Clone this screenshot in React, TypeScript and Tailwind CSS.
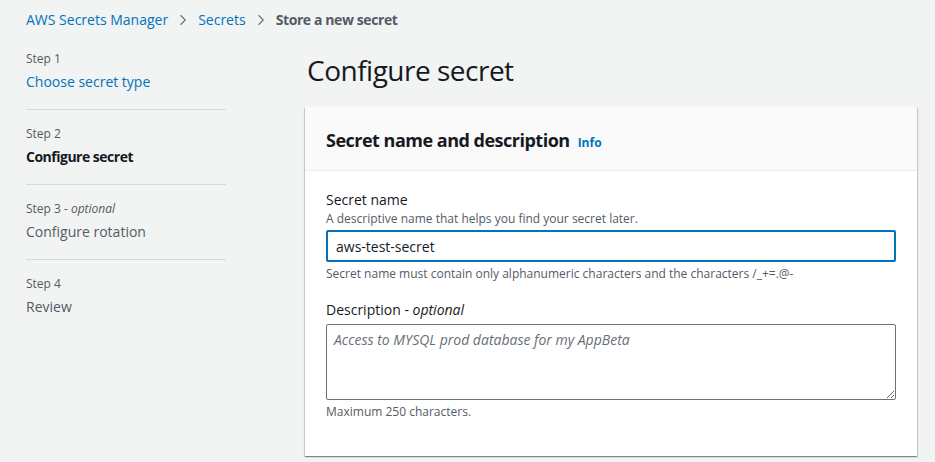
import { ChevronRight } from "lucide-react";

const FONT = { fontFamily: '"Open Sans", "Noto Sans", Arial, sans-serif' };

type Step = { label: string; title: string; optional?: boolean; state: "link" | "active" | "idle" };

const STEPS: Step[] = [
  { label: "Step 1", title: "Choose secret type", state: "link" },
  { label: "Step 2", title: "Configure secret", state: "active" },
  { label: "Step 3", title: "Configure rotation", optional: true, state: "idle" },
  { label: "Step 4", title: "Review", state: "idle" },
];

function StepNav() {
  return (
    <nav className="w-[200px] shrink-0">
      {STEPS.map((s, i) => (
        <div
          key={s.label}
          className={
            "pb-[14px] " + (i > 0 ? "border-t border-[#d5dbdb] pt-[14px]" : "pt-0")
          }
        >
          <div className="text-[12px] leading-[20px] text-[#545b64]">
            {s.label}
            {s.optional && <i> - optional</i>}
          </div>
          <div
            className={
              "text-[14px] leading-[26px] " +
              (s.state === "link"
                ? "text-[#0073bb]"
                : s.state === "active"
                  ? "font-bold tracking-[-0.5px] text-[#16191f]"
                  : "text-[#545b64]")
            }
          >
            {s.title}
          </div>
        </div>
      ))}
    </nav>
  );
}

export default function App() {
  return (
    <div className="min-h-[462px] bg-[#f2f3f3] text-[#16191f]" style={FONT}>
      <div className="flex items-center gap-[6px] px-[26px] pt-[9px] text-[14px] leading-[22px]">
        <span className="text-[#0073bb]">AWS Secrets Manager</span>
        <ChevronRight className="size-[18px] text-[#687078]" strokeWidth={1.5} />
        <span className="text-[#0073bb]">Secrets</span>
        <ChevronRight className="size-[18px] text-[#687078]" strokeWidth={1.5} />
        <span className="font-bold tracking-[-0.4px] text-[#545b64]">Store a new secret</span>
      </div>

      <div className="flex gap-[79px] pl-[26px] pr-[18px] pt-[18px]">
        <StepNav />

        <main className="min-w-0 flex-1 pt-[3px]">
          <h1 className="pl-[2px] text-[28px] leading-[36px] tracking-[-0.5px] text-[#16191f]">
            Configure secret
          </h1>

          <section className="mt-[19px] bg-white shadow-[0_1px_1px_0_rgba(0,28,36,0.3),1px_1px_1px_0_rgba(0,28,36,0.15),-1px_1px_1px_0_rgba(0,28,36,0.15)]">
            <header className="flex items-baseline gap-[8px] border-b border-[#eaeded] bg-[#fafafa] px-[21px] pb-[17px] pt-[20px]">
              <h2 className="text-[18px] font-bold leading-[26px] tracking-[-0.5px]">
                Secret name and description
              </h2>
              <span className="text-[12px] font-bold text-[#0073bb]">Info</span>
            </header>

            <div className="px-[21px] pb-[36px] pt-[18px]">
              <label className="block text-[14px] leading-[22px]">Secret name</label>
              <div className="text-[12px] leading-[16px] text-[#545b64]">
                A descriptive name that helps you find your secret later.
              </div>
              <input
                className="mt-[3px] block h-[32px] w-full rounded-[2px] border-2 border-[#0073bb] px-[8px] text-[14px] text-[#16191f] outline-none"
                style={FONT}
                defaultValue="aws-test-secret"
              />
              <div className="mt-[4px] text-[12px] leading-[16px] text-[#545b64]">
                Secret name must contain only alphanumeric characters and the characters /_+=.@-
              </div>

              <label className="mt-[17px] block text-[14px] leading-[22px]">
                Description - <i>optional</i>
              </label>
              <textarea
                className="mt-[3px] block h-[76px] w-full rounded-[2px] border border-[#687078] px-[7px] py-[4px] text-[14px] placeholder:italic placeholder:text-[#687078]"
                style={FONT}
                placeholder="Access to MYSQL prod database for my AppBeta"
              />
              <div className="mt-[4px] text-[12px] leading-[16px] text-[#545b64]">
                Maximum 250 characters.
              </div>
            </div>
          </section>
        </main>
      </div>
    </div>
  );
}
